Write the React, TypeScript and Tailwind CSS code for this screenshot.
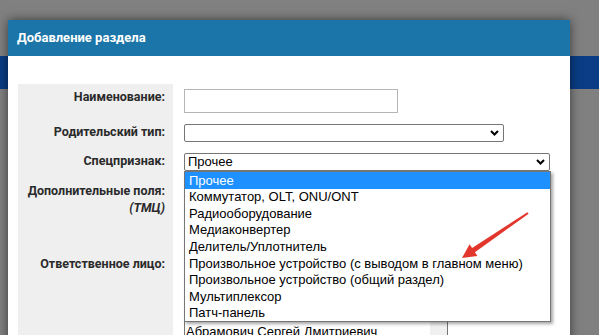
import React from "react";

const Chevron = () => (
  <svg width="9" height="6" viewBox="0 0 9 6" className="shrink-0">
    <path d="M1 1 L4.5 4.5 L8 1" fill="none" stroke="#000" strokeWidth="2" />
  </svg>
);

const options = [
  "Прочее",
  "Коммутатор, OLT, ONU/ONT",
  "Радиооборудование",
  "Медиаконвертер",
  "Делитель/Уплотнитель",
  "Произвольное устройство (с выводом в главном меню)",
  "Произвольное устройство (общий раздел)",
  "Мультиплексор",
  "Патч-панель",
];

const labelCls =
  "w-[155px] shrink-0 bg-[#efefef] pr-[8px] text-right font-bold text-[12.5px] leading-[16px] text-[#2a2a2a]";

export default function App() {
  return (
    <div
      className="relative w-[599px] h-[335px] overflow-hidden bg-[#808080]"
      style={{ fontFamily: 'Roboto, "Noto Sans", Arial, sans-serif' }}
    >
      {/* underlying page strip */}
      <div className="mt-[56px] h-[33px] bg-[#0a3d85]" />

      {/* dialog */}
      <div className="absolute left-[8px] top-[20px] w-[562px] h-[330px] bg-white shadow-[0_0_10px_rgba(0,0,0,0.55)]">
        <div className="h-[36px] bg-[#1b75a8] pl-[9px] flex items-center text-white font-bold text-[13px]">
          Добавление раздела
        </div>
        <div className="px-[10px] pt-[28px] flex flex-col">
          {/* row 1 */}
          <div className="flex h-[35px]">
            <div className={`${labelCls} pt-[5px]`}>Наименование:</div>
            <div className="pl-[11px] pt-[5px]">
              <div className="w-[214px] h-[24px] border border-[#b5b5b5] bg-white" />
            </div>
          </div>
          {/* row 2 */}
          <div className="flex h-[29px]">
            <div className={`${labelCls} pt-[5px]`}>Родительский тип:</div>
            <div className="pl-[11px] pt-[5px]">
              <div className="w-[320px] h-[18px] border border-[#767676] rounded-[2px] bg-white flex items-center justify-end pr-[4px]">
                <Chevron />
              </div>
            </div>
          </div>
          {/* row 3 */}
          <div className="flex h-[29px]">
            <div className={`${labelCls} pt-[5px]`}>Спецпризнак:</div>
            <div className="pl-[11px] pt-[5px]">
              <div
                className="w-[366px] h-[18px] border border-[#767676] rounded-[2px] bg-white flex items-center justify-between pl-[3px] pr-[4px] text-[13px] text-black"
                style={{ fontFamily: '"Liberation Sans", Arial, sans-serif' }}
              >
                <span>Прочее</span>
                <Chevron />
              </div>
            </div>
          </div>
          {/* row 4 */}
          <div className="flex h-[66px]">
            <div className={`${labelCls} pt-[5px] leading-[17px]`}>
              Дополнительные поля:
              <br />
              <span className="italic">(ТМЦ)</span>
            </div>
            <div className="pl-[11px]" />
          </div>
          {/* row 5 */}
          <div className="flex h-[120px]">
            <div className={`${labelCls} pt-[13px]`}>Ответственное лицо:</div>
            <div className="pl-[11px] pt-[5px]">
              <div
                className="w-[264px] h-[110px] border border-[#767676] bg-white flex text-[13px] text-black"
                style={{ fontFamily: '"Liberation Sans", Arial, sans-serif' }}
              >
                <div className="flex-1 flex flex-col pl-[1px] pt-[75px] leading-[15px]">
                  <span>Абрамович Сергей Дмитриевич</span>
                </div>
                <div className="w-[17px] bg-[#f0f0f0]" />
              </div>
            </div>
          </div>
        </div>
      </div>

      {/* open dropdown */}
      <div
        className="absolute left-[184px] top-[171px] w-[367px] border border-[#767676] bg-white shadow-[2px_2px_3px_rgba(0,0,0,0.35)] text-[13px] text-black"
        style={{ fontFamily: '"Liberation Sans", Arial, sans-serif' }}
      >
        {options.map((o, i) => (
          <div
            key={o}
            className={`h-[16.6px] flex items-center pl-[4px] whitespace-nowrap ${
              i === 0 ? "bg-[#1e90ff] text-white" : ""
            }`}
          >
            {o}
          </div>
        ))}
      </div>

      {/* red arrow */}
      <svg className="absolute left-0 top-0" width="599" height="335" viewBox="0 0 599 335">
        <polygon
          points="528.6,213.8 474.9,252.2 477.4,255.9 462,258 469.6,244.3 472.1,248 527.4,212.2"
          fill="#e2362c"
        />
      </svg>
    </div>
  );
}
